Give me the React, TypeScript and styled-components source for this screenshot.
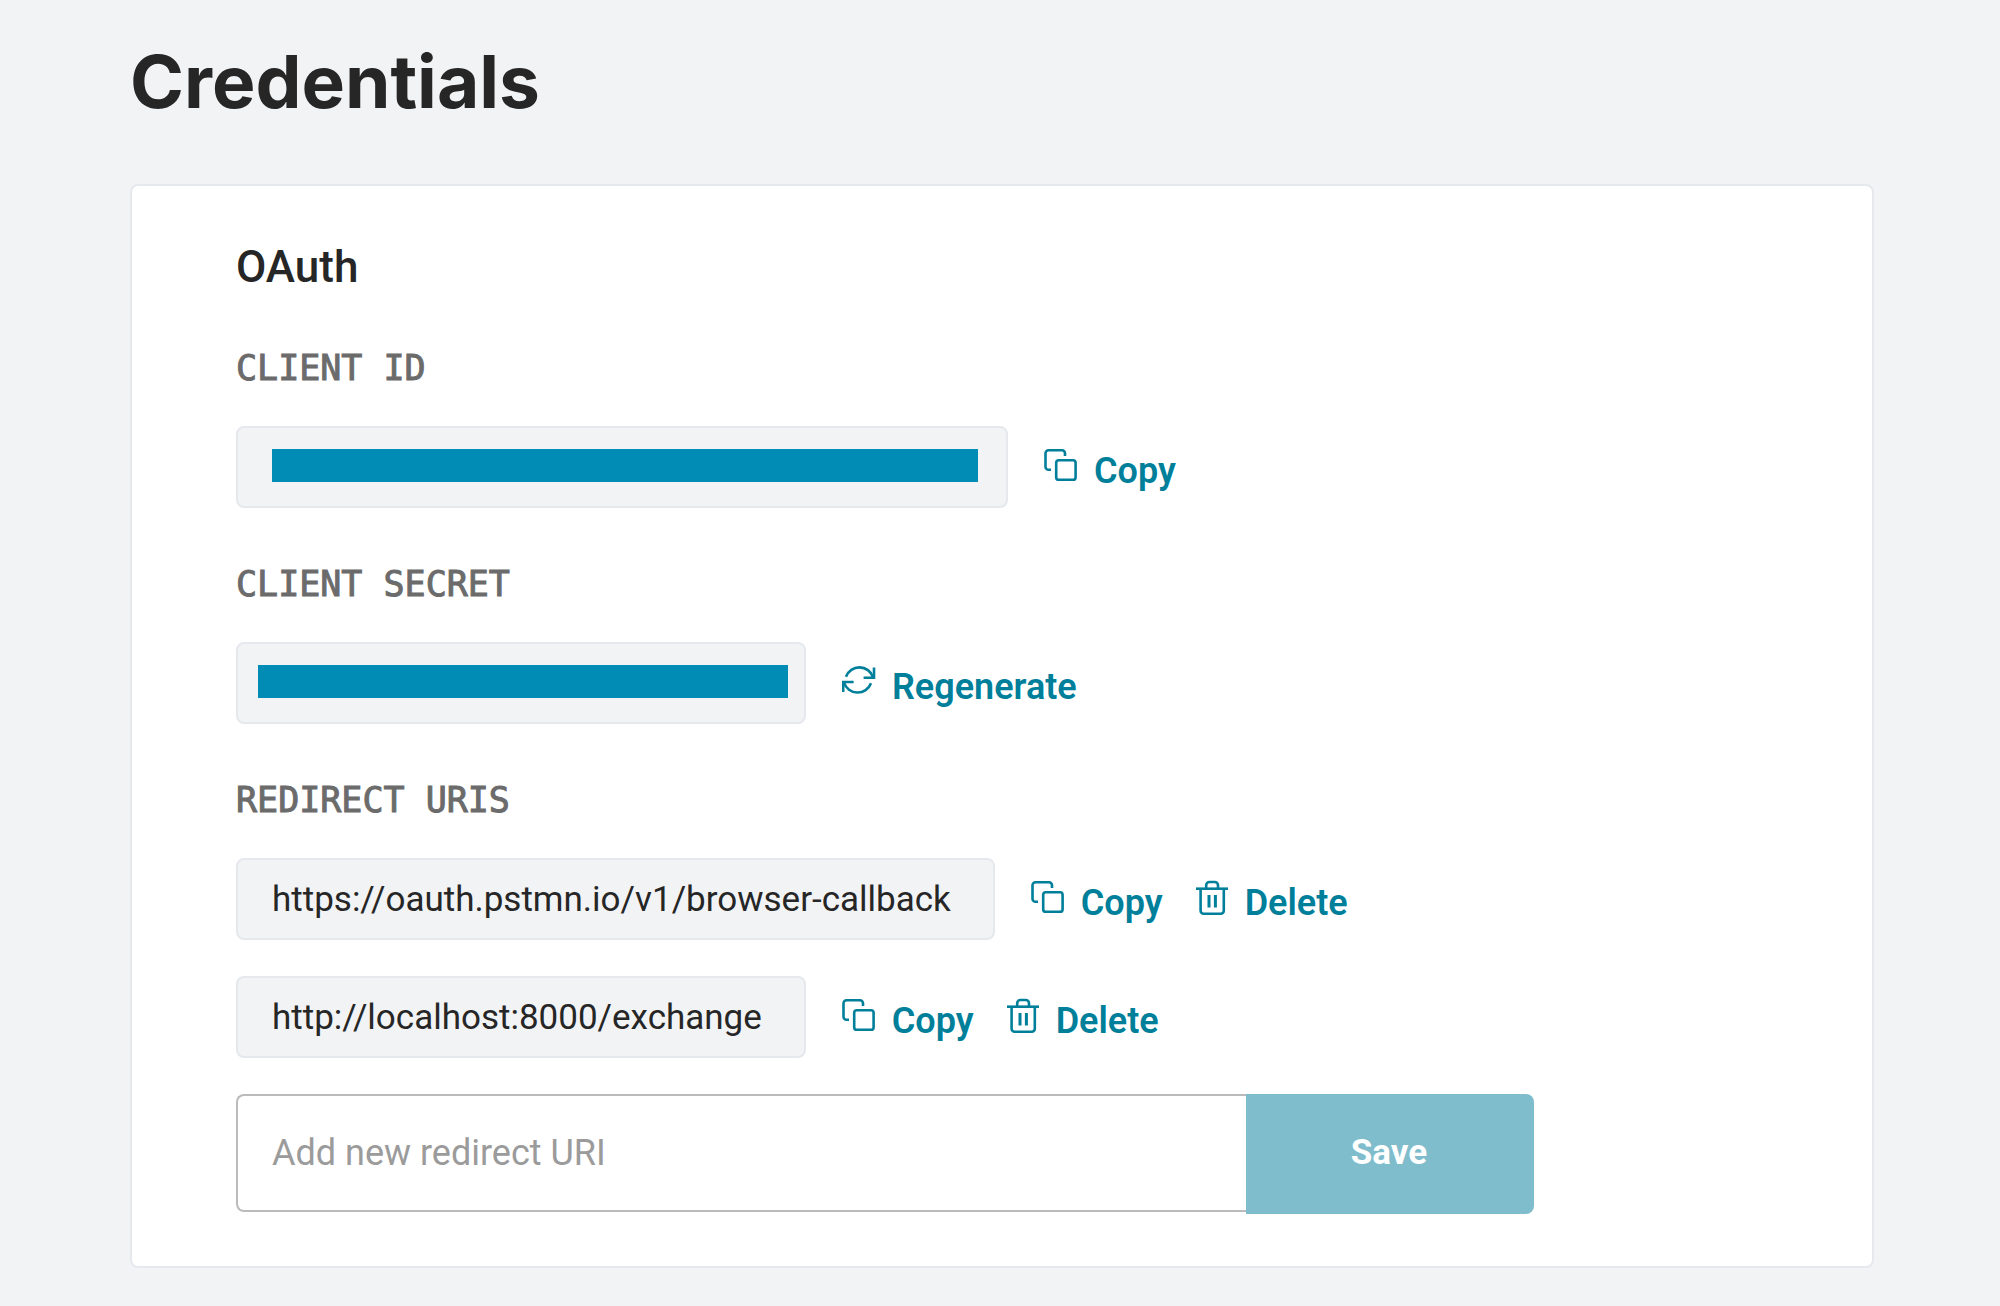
import React, { useId, useState } from "react";
import styled, { createGlobalStyle } from "styled-components";

const color = {
  page: "#f2f3f5",
  card: "#ffffff",
  line: "#e5e8ec",
  ink: "#262626",
  muted: "#6b6b6b",
  accent: "#007f9b",
  mask: "#008cb5",
  inputLine: "#bbbbbb",
  placeholder: "#9b9b9b",
  disabled: "#80bdcc",
};

const sans = `Roboto, "Liberation Sans", sans-serif`;

const GlobalStyle = createGlobalStyle`
  *, *::before, *::after { box-sizing: border-box; }
  body {
    margin: 0;
    background: ${color.page};
    color: ${color.ink};
    font-family: ${sans};
  }
`;

const Page = styled.main`
  min-height: 100vh;
  padding: 40px 126px 39px 130px;
`;

const PageTitle = styled.h1`
  margin: 0 0 60px;
  font-family: Inter, sans-serif;
  font-size: 73px;
  line-height: 84px;
  font-weight: 700;
`;

const Card = styled.section`
  display: flex;
  flex-direction: column;
  gap: 52px;
  padding: 54px 104px 52px;
  background: ${color.card};
  border: 2px solid ${color.line};
  border-radius: 8px;
`;

const CardTitle = styled.h2`
  margin: 0;
  padding-top: 2px;
  font-size: 44px;
  line-height: 50px;
  font-weight: 500;
`;

const Field = styled.section`
  display: flex;
  flex-direction: column;
  gap: 36px;
`;

const FieldLabel = styled.h3`
  margin: 0;
  padding-top: 2px;
  color: ${color.muted};
  font-family: "DejaVu Sans Mono", monospace;
  font-size: 35px;
  line-height: 44px;
  font-weight: 400;
  text-transform: uppercase;
  -webkit-text-stroke: 1px ${color.muted};
`;

const Row = styled.div`
  display: flex;
  align-items: center;
  gap: 36px;
`;

const Chip = styled.div<{ $start?: number; $end?: number }>`
  display: flex;
  align-items: center;
  height: 82px;
  padding: 2px ${(p) => p.$end ?? 42}px 0 ${(p) => p.$start ?? 34}px;
  background: ${color.page};
  border: 2px solid ${color.line};
  border-radius: 8px;
  font-size: 35px;
  line-height: 46px;
  white-space: nowrap;
`;

const Mask = styled.span<{ $width: number }>`
  width: ${(p) => p.$width}px;
  height: 33px;
  margin-bottom: 6px;
  background: ${color.mask};
`;

const Actions = styled.div`
  display: flex;
  gap: 32px;
`;

const Action = styled.button`
  display: flex;
  align-items: center;
  gap: 14px;
  padding: 8px 0 0;
  border: 0;
  background: none;
  color: ${color.accent};
  font-family: ${sans};
  font-size: 36px;
  line-height: 46px;
  font-weight: 600;
  cursor: pointer;
`;

const Icon = styled.svg`
  flex: none;
  width: 36px;
  height: 36px;
  margin-bottom: 10px;
  fill: none;
  stroke: currentColor;
  stroke-width: 2.6;
`;

const AddForm = styled.form`
  display: flex;
  align-items: flex-start;
  max-width: 1298px;
`;

const UriInput = styled.input`
  flex: 1;
  min-width: 0;
  height: 118px;
  padding: 0 34px;
  border: 2px solid ${color.inputLine};
  border-right: 0;
  border-radius: 8px 0 0 8px;
  background: ${color.card};
  color: ${color.ink};
  font-family: ${sans};
  font-size: 36px;
  outline: none;

  &::placeholder {
    color: ${color.placeholder};
    opacity: 1;
  }
`;

const SaveButton = styled.button`
  width: 288px;
  height: 120px;
  padding: 0 2px 4px 0;
  border: 0;
  border-radius: 0 8px 8px 0;
  background: ${color.disabled};
  color: #ffffff;
  font-family: ${sans};
  font-size: 35px;
  font-weight: 700;
`;

const CopyIcon = () => (
  <Icon viewBox="0 0 36 36" aria-hidden="true">
    <path d="M7 21.8H4.5a3 3 0 0 1-3-3V5.2a3 3 0 0 1 3-3H18a3 3 0 0 1 3 3V8" />
    <rect x="12.2" y="12.2" width="19.4" height="19.6" rx="2.6" />
  </Icon>
);

const RegenerateIcon = () => (
  <Icon viewBox="0 0 36 36" aria-hidden="true">
    <path d="M4 12.7A14.3 14.3 0 0 1 31 13.2" />
    <path d="M32 3.6V13.8H21.6" />
    <path d="M29 19.3A14.3 14.3 0 0 1 2 18.6" />
    <path d="M1.2 28V18H11.6" />
  </Icon>
);

const DeleteIcon = () => (
  <Icon viewBox="0 0 36 36" aria-hidden="true">
    <path d="M1 8.7H33" />
    <path d="M11.2 8.7V5.2a3.2 3.2 0 0 1 3.2-3.2h5.4a3.2 3.2 0 0 1 3.2 3.2v3.5" />
    <path d="M5.6 8.7V30.8a3 3 0 0 0 3 3h17.2a3 3 0 0 0 3-3V8.7" />
    <path d="M14 15V27.6M20.4 15V27.6" strokeWidth="3" />
  </Icon>
);

const redirectUris = [
  "https://oauth.pstmn.io/v1/browser-callback",
  "http://localhost:8000/exchange",
];

export default function App() {
  const inputId = useId();
  const [uri, setUri] = useState("");

  return (
    <>
      <GlobalStyle />
      <Page>
        <PageTitle>Credentials</PageTitle>
        <Card>
          <CardTitle>OAuth</CardTitle>

          <Field>
            <FieldLabel>Client ID</FieldLabel>
            <Row>
              <Chip $end={28}>
                <Mask $width={706} />
              </Chip>
              <Actions>
                <Action type="button">
                  <CopyIcon />
                  Copy
                </Action>
              </Actions>
            </Row>
          </Field>

          <Field>
            <FieldLabel>Client Secret</FieldLabel>
            <Row>
              <Chip $start={20} $end={16}>
                <Mask $width={530} />
              </Chip>
              <Actions>
                <Action type="button">
                  <RegenerateIcon />
                  Regenerate
                </Action>
              </Actions>
            </Row>
          </Field>

          <Field>
            <FieldLabel as="label" htmlFor={inputId}>
              Redirect URIs
            </FieldLabel>
            {redirectUris.map((value) => (
              <Row key={value}>
                <Chip>{value}</Chip>
                <Actions>
                  <Action type="button">
                    <CopyIcon />
                    Copy
                  </Action>
                  <Action type="button">
                    <DeleteIcon />
                    Delete
                  </Action>
                </Actions>
              </Row>
            ))}
            <AddForm onSubmit={(event) => event.preventDefault()}>
              <UriInput
                id={inputId}
                type="text"
                placeholder="Add new redirect URI"
                value={uri}
                onChange={(event) => setUri(event.target.value)}
              />
              <SaveButton type="submit" disabled={uri === ""}>
                Save
              </SaveButton>
            </AddForm>
          </Field>
        </Card>
      </Page>
    </>
  );
}
